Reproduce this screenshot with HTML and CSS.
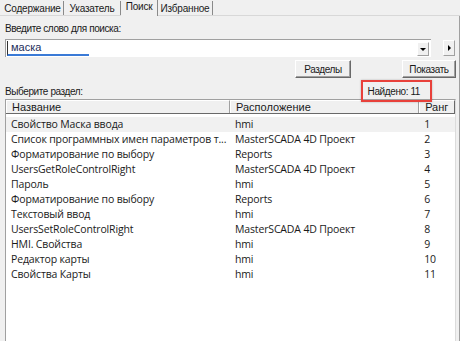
FILE: index.html
```html
<!DOCTYPE html>
<html lang="ru">
<head>
    <meta charset="UTF-8">
    <title>Поиск</title>
    <link rel="stylesheet" href="styles.css">
</head>
<body>
    <div class="window">
        <div class="tabs">
            <div class="tab tab-contents">Содержание</div>
            <div class="tab tab-index">Указатель</div>
            <div class="tab tab-search active">Поиск</div>
            <div class="tab tab-fav">Избранное</div>
        </div>
        <div class="page">
            <div class="label">Введите слово для поиска:</div>
            <div class="search-row">
                <div class="combo">
                    <span class="combo-text">маска</span>
                    <span class="combo-btn"><span class="arrow-down"></span></span>
                </div>
                <div class="small-btn"><span class="arrow-right"></span></div>
            </div>
            <div class="buttons-row">
                <div class="button btn-sections">Разделы</div>
                <div class="button btn-show">Показать</div>
            </div>
            <div class="result-row">
                <span class="label">Выберите раздел:</span>
                <span class="found">Найдено: 11</span>
            </div>
            <div class="list">
                <div class="list-head">
                    <div class="col-name">Название</div>
                    <div class="col-place">Расположение</div>
                    <div class="col-rank">Ранг</div>
                </div>
                <div class="list-body">
                    <div class="row hover"><div class="col-name">Свойство Маска ввода</div><div class="col-place">hmi</div><div class="col-rank">1</div></div>
                    <div class="row"><div class="col-name">Список программных имен параметров т...</div><div class="col-place">MasterSCADA 4D Проект</div><div class="col-rank">2</div></div>
                    <div class="row"><div class="col-name">Форматирование по выбору</div><div class="col-place">Reports</div><div class="col-rank">3</div></div>
                    <div class="row"><div class="col-name">UsersGetRoleControlRight</div><div class="col-place">MasterSCADA 4D Проект</div><div class="col-rank">4</div></div>
                    <div class="row"><div class="col-name">Пароль</div><div class="col-place">hmi</div><div class="col-rank">5</div></div>
                    <div class="row"><div class="col-name">Форматирование по выбору</div><div class="col-place">Reports</div><div class="col-rank">6</div></div>
                    <div class="row"><div class="col-name">Текстовый ввод</div><div class="col-place">hmi</div><div class="col-rank">7</div></div>
                    <div class="row"><div class="col-name">UsersSetRoleControlRight</div><div class="col-place">MasterSCADA 4D Проект</div><div class="col-rank">8</div></div>
                    <div class="row"><div class="col-name">HMI. Свойства</div><div class="col-place">hmi</div><div class="col-rank">9</div></div>
                    <div class="row"><div class="col-name">Редактор карты</div><div class="col-place">hmi</div><div class="col-rank">10</div></div>
                    <div class="row"><div class="col-name">Свойства Карты</div><div class="col-place">hmi</div><div class="col-rank">11</div></div>
                </div>
            </div>
        </div>
    </div>
</body>
</html>
```

FILE: styles.css
```css
body {
    margin: 0;
    background-color: #ffffff;
    font-family: "Liberation Sans", Arial, sans-serif;
    font-size: 10px;
    letter-spacing: -0.4px;
    color: #1a1a1a;
    overflow: hidden;
}

.window {
    width: 460px;
    height: 341px;
    background-color: #f0f0f0;
    display: flex;
    flex-direction: column;
}

.tabs {
    display: flex;
    align-items: flex-end;
    height: 16px;
    padding-left: 2px;
    border-bottom: 1px solid #d8d8d8;
    box-sizing: border-box;
}
.tab {
    height: 14px;
    line-height: 15px;
    text-align: center;
    border-right: 1px solid #8a8a8a;
    box-sizing: border-box;
    letter-spacing: -0.2px;
}
.tab-contents { width: 62px; }
.tab-index { width: 57px; }
.tab-search { width: 37px; }
.tab-fav { width: 55px; }
.tab.active {
    height: 16px;
    line-height: 13px;
    background-color: #f0f0f0;
    margin-bottom: -1px;
}

.page {
    flex: 1;
    display: flex;
    flex-direction: column;
    padding: 6px 0 0 5px;
    border-right: 1px solid #a0a0a0;
    min-height: 0;
}
.label {
    height: 14px;
    line-height: 14px;
}

.search-row {
    display: flex;
    align-items: center;
    margin-top: 3px;
    gap: 12px;
}
.combo {
    width: 426px;
    height: 18px;
    box-sizing: border-box;
    background-color: #fff;
    border-top: 1px solid #a0a0a0;
    border-left: 1px solid #a0a0a0;
    display: flex;
    align-items: center;
    justify-content: space-between;
}
.combo-text {
    margin-left: 1px;
    padding-left: 3px;
    width: 78px;
    height: 13px;
    line-height: 13px;
    font-size: 11px;
    letter-spacing: 0;
    color: #232f5c;
    border-left: 1px solid #333;
    border-bottom: 2px solid #3a7ad6;
}
.combo-btn {
    width: 12px;
    height: 14px;
    margin-right: 2px;
    background-color: #f0f0f0;
    border: 1px solid #a0a0a0;
    border-top-color: #fff;
    border-left-color: #fff;
    box-sizing: border-box;
    display: flex;
    align-items: center;
    justify-content: center;
}
.arrow-down {
    width: 0;
    height: 0;
    border-left: 3px solid transparent;
    border-right: 3px solid transparent;
    border-top: 3px solid #000;
    margin-top: 2px;
}
.small-btn {
    width: 12px;
    height: 16px;
    background-color: #f0f0f0;
    border: 1px solid #a0a0a0;
    border-top-color: #fff;
    border-left-color: #fff;
    box-sizing: border-box;
    display: flex;
    align-items: center;
    justify-content: center;
}
.arrow-right {
    width: 0;
    height: 0;
    border-top: 3px solid transparent;
    border-bottom: 3px solid transparent;
    border-left: 3px solid #000;
}

.buttons-row {
    display: flex;
    justify-content: flex-end;
    gap: 51px;
    margin-top: 3px;
    padding-right: 3px;
}
.button {
    height: 18px;
    line-height: 17px;
    box-sizing: border-box;
    text-align: center;
    background-color: #f0f0f0;
    border: 1px solid #696969;
    border-top-color: #fff;
    border-left-color: #fff;
    box-shadow: inset -1px -1px 0 #a0a0a0;
}
.btn-sections { width: 56px; }
.btn-show { width: 54px; }

.result-row {
    display: flex;
    justify-content: space-between;
    align-items: flex-end;
    margin-top: 7px;
    padding-right: 39px;
    height: 14px;
}
.found {
    position: relative;
    height: 14px;
    line-height: 14px;
}
.found::after {
    content: "";
    position: absolute;
    left: -7px;
    right: -12px;
    top: -5px;
    bottom: -3px;
    border: 2px solid #e8413b;
    box-shadow: 0 0 2px rgba(0, 0, 0, 0.25);
}

.list {
    flex: 1;
    margin-right: 3px;
    background-color: #fff;
    border-top: 1px solid #a0a0a0;
    border-left: 1px solid #a0a0a0;
    border-right: 1px solid #dcdcdc;
    display: flex;
    flex-direction: column;
}
.list-head {
    display: flex;
    height: 13px;
    line-height: 12px;
    font-size: 11px;
    letter-spacing: 0;
    border-bottom: 1px solid #696969;
}
.list-head > div {
    background-color: #f0f0f0;
    border-right: 1px solid #a0a0a0;
    border-left: 1px solid #fff;
    border-top: 1px solid #fff;
    padding-left: 5px;
    box-sizing: border-box;
}
.list-head .col-rank { border-right: 1px solid #696969; }
.col-name { width: 225px; }
.col-place { width: 190px; }
.col-rank { width: 36px; }

.list-body {
    padding-top: 3px;
    font-family: "Open Sans", "Noto Sans", sans-serif;
    font-size: 10.5px;
    letter-spacing: -0.15px;
}
.row {
    display: flex;
    height: 15px;
    line-height: 15px;
}
.row.hover {
    background-color: #f1f1f1;
}
.row > div {
    white-space: nowrap;
    overflow: hidden;
    padding-left: 5px;
    box-sizing: border-box;
}
```
